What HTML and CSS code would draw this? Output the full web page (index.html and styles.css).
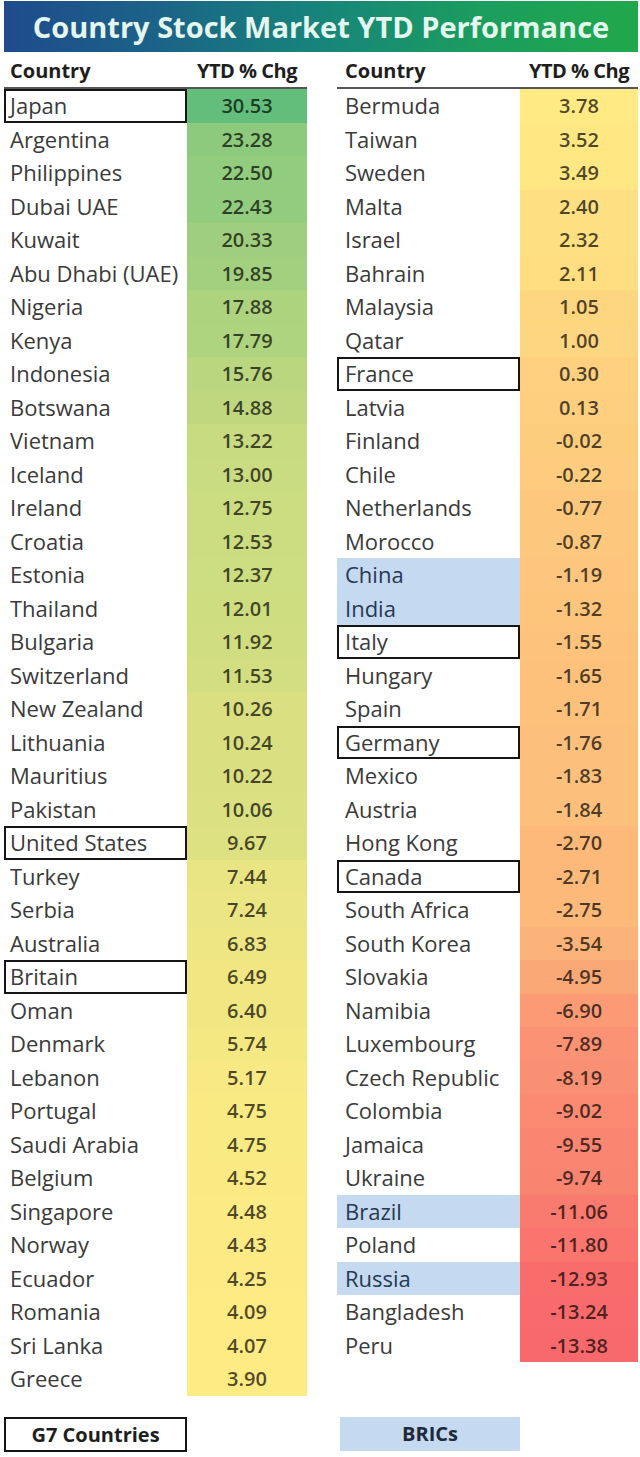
FILE: index.html
```html
<!DOCTYPE html>
<html lang="en">
<head>
<meta charset="utf-8">
<title>Country Stock Market YTD Performance</title>
<link rel="stylesheet" href="styles.css">
</head>
<body>
<div class="page">
  <div class="title">Country Stock Market YTD Performance</div>
  <div class="tables">
    <div class="tbl tbl-left">
      <div class="hd hd-name">Country</div><div class="hd hd-val">YTD % Chg</div>
      <div class="nm g7">Japan</div><div class="val" style="background:rgb(99,190,123)">30.53</div>
      <div class="nm">Argentina</div><div class="val" style="background:rgb(141,202,125)">23.28</div>
      <div class="nm">Philippines</div><div class="val" style="background:rgb(146,204,126)">22.50</div>
      <div class="nm">Dubai UAE</div><div class="val" style="background:rgb(146,204,126)">22.43</div>
      <div class="nm">Kuwait</div><div class="val" style="background:rgb(159,207,126)">20.33</div>
      <div class="nm">Abu Dhabi (UAE)</div><div class="val" style="background:rgb(162,208,127)">19.85</div>
      <div class="nm">Nigeria</div><div class="val" style="background:rgb(173,211,127)">17.88</div>
      <div class="nm">Kenya</div><div class="val" style="background:rgb(174,212,127)">17.79</div>
      <div class="nm">Indonesia</div><div class="val" style="background:rgb(186,215,128)">15.76</div>
      <div class="nm">Botswana</div><div class="val" style="background:rgb(191,216,128)">14.88</div>
      <div class="nm">Vietnam</div><div class="val" style="background:rgb(200,219,129)">13.22</div>
      <div class="nm">Iceland</div><div class="val" style="background:rgb(202,220,129)">13.00</div>
      <div class="nm">Ireland</div><div class="val" style="background:rgb(203,220,129)">12.75</div>
      <div class="nm">Croatia</div><div class="val" style="background:rgb(204,220,129)">12.53</div>
      <div class="nm">Estonia</div><div class="val" style="background:rgb(205,221,129)">12.37</div>
      <div class="nm">Thailand</div><div class="val" style="background:rgb(207,221,129)">12.01</div>
      <div class="nm">Bulgaria</div><div class="val" style="background:rgb(208,221,129)">11.92</div>
      <div class="nm">Switzerland</div><div class="val" style="background:rgb(210,222,129)">11.53</div>
      <div class="nm">New Zealand</div><div class="val" style="background:rgb(218,224,130)">10.26</div>
      <div class="nm">Lithuania</div><div class="val" style="background:rgb(218,224,130)">10.24</div>
      <div class="nm">Mauritius</div><div class="val" style="background:rgb(218,224,130)">10.22</div>
      <div class="nm">Pakistan</div><div class="val" style="background:rgb(219,225,130)">10.06</div>
      <div class="nm g7">United States</div><div class="val" style="background:rgb(221,225,130)">9.67</div>
      <div class="nm">Turkey</div><div class="val" style="background:rgb(234,229,131)">7.44</div>
      <div class="nm">Serbia</div><div class="val" style="background:rgb(235,229,131)">7.24</div>
      <div class="nm">Australia</div><div class="val" style="background:rgb(238,230,131)">6.83</div>
      <div class="nm g7">Britain</div><div class="val" style="background:rgb(240,231,131)">6.49</div>
      <div class="nm">Oman</div><div class="val" style="background:rgb(240,231,131)">6.40</div>
      <div class="nm">Denmark</div><div class="val" style="background:rgb(244,232,131)">5.74</div>
      <div class="nm">Lebanon</div><div class="val" style="background:rgb(248,233,132)">5.17</div>
      <div class="nm">Portugal</div><div class="val" style="background:rgb(250,234,132)">4.75</div>
      <div class="nm">Saudi Arabia</div><div class="val" style="background:rgb(250,234,132)">4.75</div>
      <div class="nm">Belgium</div><div class="val" style="background:rgb(251,234,132)">4.52</div>
      <div class="nm">Singapore</div><div class="val" style="background:rgb(252,234,132)">4.48</div>
      <div class="nm">Norway</div><div class="val" style="background:rgb(252,234,132)">4.43</div>
      <div class="nm">Ecuador</div><div class="val" style="background:rgb(253,234,132)">4.25</div>
      <div class="nm">Romania</div><div class="val" style="background:rgb(254,235,132)">4.09</div>
      <div class="nm">Sri Lanka</div><div class="val" style="background:rgb(254,235,132)">4.07</div>
      <div class="nm">Greece</div><div class="val" style="background:rgb(255,235,132)">3.90</div>
    </div>
    <div class="tbl tbl-right">
      <div class="hd hd-name">Country</div><div class="hd hd-val">YTD % Chg</div>
      <div class="nm">Bermuda</div><div class="val" style="background:rgb(255,234,132)">3.78</div>
      <div class="nm">Taiwan</div><div class="val" style="background:rgb(255,232,131)">3.52</div>
      <div class="nm">Sweden</div><div class="val" style="background:rgb(255,232,131)">3.49</div>
      <div class="nm">Malta</div><div class="val" style="background:rgb(254,224,130)">2.40</div>
      <div class="nm">Israel</div><div class="val" style="background:rgb(254,223,130)">2.32</div>
      <div class="nm">Bahrain</div><div class="val" style="background:rgb(254,222,129)">2.11</div>
      <div class="nm">Malaysia</div><div class="val" style="background:rgb(254,214,128)">1.05</div>
      <div class="nm">Qatar</div><div class="val" style="background:rgb(254,213,128)">1.00</div>
      <div class="nm g7">France</div><div class="val" style="background:rgb(254,208,127)">0.30</div>
      <div class="nm">Latvia</div><div class="val" style="background:rgb(253,207,127)">0.13</div>
      <div class="nm">Finland</div><div class="val" style="background:rgb(253,205,126)">-0.02</div>
      <div class="nm">Chile</div><div class="val" style="background:rgb(253,204,126)">-0.22</div>
      <div class="nm">Netherlands</div><div class="val" style="background:rgb(253,200,125)">-0.77</div>
      <div class="nm">Morocco</div><div class="val" style="background:rgb(253,199,125)">-0.87</div>
      <div class="nm bric">China</div><div class="val" style="background:rgb(253,197,125)">-1.19</div>
      <div class="nm bric">India</div><div class="val" style="background:rgb(253,196,124)">-1.32</div>
      <div class="nm g7">Italy</div><div class="val" style="background:rgb(253,194,124)">-1.55</div>
      <div class="nm">Hungary</div><div class="val" style="background:rgb(253,193,124)">-1.65</div>
      <div class="nm">Spain</div><div class="val" style="background:rgb(253,193,124)">-1.71</div>
      <div class="nm g7">Germany</div><div class="val" style="background:rgb(253,192,124)">-1.76</div>
      <div class="nm">Mexico</div><div class="val" style="background:rgb(253,192,124)">-1.83</div>
      <div class="nm">Austria</div><div class="val" style="background:rgb(253,192,124)">-1.84</div>
      <div class="nm">Hong Kong</div><div class="val" style="background:rgb(252,185,122)">-2.70</div>
      <div class="nm g7">Canada</div><div class="val" style="background:rgb(252,185,122)">-2.71</div>
      <div class="nm">South Africa</div><div class="val" style="background:rgb(252,185,122)">-2.75</div>
      <div class="nm">South Korea</div><div class="val" style="background:rgb(252,179,121)">-3.54</div>
      <div class="nm">Slovakia</div><div class="val" style="background:rgb(251,168,119)">-4.95</div>
      <div class="nm">Namibia</div><div class="val" style="background:rgb(251,154,116)">-6.90</div>
      <div class="nm">Luxembourg</div><div class="val" style="background:rgb(250,146,115)">-7.89</div>
      <div class="nm">Czech Republic</div><div class="val" style="background:rgb(250,144,115)">-8.19</div>
      <div class="nm">Colombia</div><div class="val" style="background:rgb(250,138,113)">-9.02</div>
      <div class="nm">Jamaica</div><div class="val" style="background:rgb(250,134,113)">-9.55</div>
      <div class="nm">Ukraine</div><div class="val" style="background:rgb(249,132,112)">-9.74</div>
      <div class="nm bric">Brazil</div><div class="val" style="background:rgb(249,122,110)">-11.06</div>
      <div class="nm">Poland</div><div class="val" style="background:rgb(249,117,109)">-11.80</div>
      <div class="nm bric">Russia</div><div class="val" style="background:rgb(248,108,108)">-12.93</div>
      <div class="nm">Bangladesh</div><div class="val" style="background:rgb(248,106,107)">-13.24</div>
      <div class="nm">Peru</div><div class="val" style="background:rgb(248,105,107)">-13.38</div>
    </div>
  </div>
  <div class="legend">
    <div class="lg lg-g7">G7 Countries</div>
    <div class="lg lg-bric">BRICs</div>
  </div>
</div>
</body>
</html>
```
FILE: styles.css
```css
* { box-sizing: border-box; }

body {
  margin: 0;
  background: #ffffff;
  font-family: "Open Sans", "Noto Sans", "Liberation Sans", sans-serif;
}

.page {
  width: 640px;
  padding: 1px 2px 0 4px;
}

.title {
  width: 634px;
  height: 51px;
  line-height: 51px;
  text-align: center;
  font-size: 29px;
  font-weight: 700;
  color: #e4f6ee;
  background: linear-gradient(90deg, #1f4b8d 0%, #1b6487 25%, #17857a 50%, #1b9d5e 75%, #20a84b 100%);
}

.tables {
  display: flex;
  align-items: flex-start;
  gap: 30px;
}

.tbl {
  display: grid;
}

.tbl-left { grid-template-columns: 183px 120px; }
.tbl-right { grid-template-columns: 183px 118px; }

.hd {
  height: 37px;
  padding-top: 2px;
  line-height: 33px;
  border-bottom: 2px solid #555555;
  font-size: 20px;
  font-weight: 700;
  color: #1e1e1e;
  white-space: nowrap;
}

.hd-name { padding-left: 6px; }
.tbl-right .hd-name { padding-left: 8px; }
.hd-val { text-align: center; letter-spacing: -0.5px; }

.nm {
  height: 33.5px;
  line-height: 33.5px;
  font-size: 22px;
  color: #3a3a3a;
  padding-left: 6px;
  white-space: nowrap;
}

.tbl-right .nm { padding-left: 8px; }

.val {
  height: 33.5px;
  line-height: 33.5px;
  text-align: center;
  font-size: 20px;
  font-weight: 600;
  color: rgba(0, 0, 0, 0.7);
}

.g7 {
  box-shadow: inset 0 0 0 2px #151515;
}

.bric {
  background: #c5d9f1;
  color: #263a52;
}

.legend {
  display: flex;
  margin-top: 21px;
}

.lg {
  font-size: 20px;
  font-weight: 700;
  text-align: center;
  color: #1e1e1e;
}

.lg-g7 {
  width: 183px;
  height: 35px;
  line-height: 31px;
  border: 2px solid #151515;
}

.lg-bric {
  width: 180px;
  height: 34px;
  line-height: 34px;
  margin-left: 153px;
  background: #c5d9f1;
  color: #1e2a3a;
}
```
